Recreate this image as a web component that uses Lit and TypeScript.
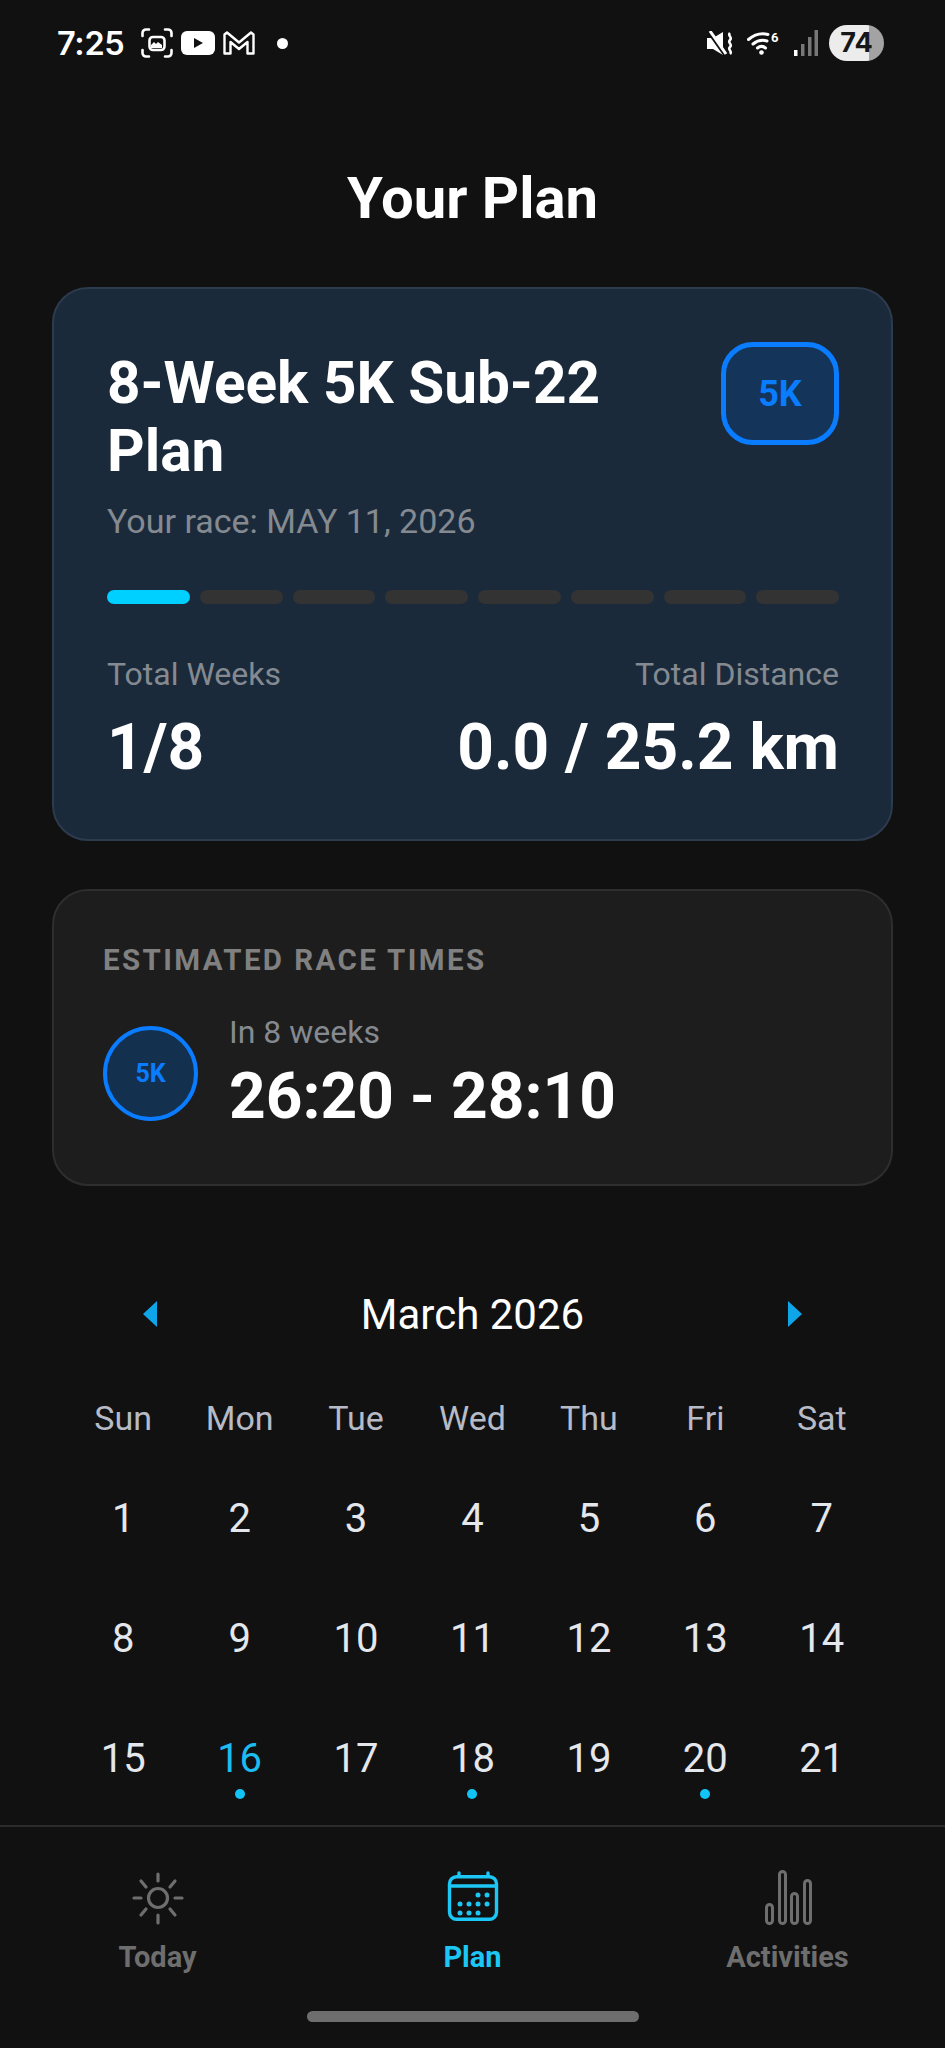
import { LitElement, html, css } from "lit";
import { customElement } from "lit/decorators.js";

const weeks = [[1,2,3,4,5,6,7],[8,9,10,11,12,13,14],[15,16,17,18,19,20,21]];
const dots = new Set([16,18,20]);
const days = ["Sun","Mon","Tue","Wed","Thu","Fri","Sat"];
const calDots = [[40,26],[49,26],[22,35],[31,35],[40,35],[49,35],[22,44],[31,44],[40,44]];

@customElement("app-root")
export class AppRoot extends LitElement {
  static styles = css`
    :host { display:block; width:945px; height:2048px; background:#111112; color:#fff; font-family:Roboto,"Noto Sans",sans-serif; overflow:hidden; }
    .page { height:2048px; display:flex; flex-direction:column; }
    .status { height:86px; flex:none; display:flex; align-items:center; padding:0 61px 0 57px; box-sizing:border-box; }
    .time { font-family:Inter,Roboto,sans-serif; font-weight:600; font-size:32.500px; margin-right:9px; letter-spacing:-.3px; }
    .left { display:flex; align-items:center; gap:8px; }
    .spacer { flex:1; }
    .right { display:flex; align-items:center; }
    .sdot { width:11px; height:11px; border-radius:50%; background:#fff; margin-left:14px; }
    .batt { width:55px; height:36px; border-radius:18px; overflow:hidden; background:linear-gradient(90deg,#ececec 0 40px,#a3a3a3 40px); color:#161616; font-family:Inter,Roboto,sans-serif; font-weight:700; font-size:27px; line-height:36px; text-align:center; margin-left:11px; }
    .main { flex:1; min-height:0; }
    h1 { margin:82px 0 59px; font-size:58px; line-height:60px; font-weight:700; text-align:center; }
    .card { margin:0 52px; box-sizing:border-box; border:2px solid #2c3b4d; border-radius:36px; }
    .plan { height:554px; background:#1b2a3b; padding:53px 52px 0 53px; }
    .phead { display:flex; justify-content:space-between; align-items:flex-start; }
    .ptitle { margin:7px 0 -2px; font-size:58.500px; line-height:68px; font-weight:700; width:560px; }
    .badge { width:118px; height:103px; box-sizing:border-box; border:5px solid #0a7cff; border-radius:32px; background:#143559; color:#0a7cff; display:flex; align-items:center; justify-content:center; font-weight:700; font-size:36px; }
    .race { margin-top:18px; font-size:34px; line-height:40px; color:#858a91; }
    .bars { display:flex; gap:10px; margin-top:49px; }
    .bars i { flex:1; height:14px; border-radius:7px; background:#333; }
    .bars i.on { background:#00d0ff; }
    .stats { display:flex; justify-content:space-between; margin-top:51px; }
    .stat.r { text-align:right; }
    .lbl { font-size:32px; line-height:38px; color:#858a91; }
    .val { font-size:64px; line-height:68px; font-weight:700; margin-top:21px; }
    .est { height:297px; margin-top:48px; background:#1d1d1d; border-color:#2e2e2e; padding:53px 48px 0 49px; }
    .est h2 { margin:0; font-size:29.500px; line-height:32px; letter-spacing:2.400px; font-weight:700; color:#808080; }
    .erow { display:flex; align-items:center; gap:31px; margin-top:37px; }
    .circle { width:95px; height:95px; box-sizing:border-box; border:4px solid #0a7cff; border-radius:50%; background:#14304f; color:#0a7cff; display:flex; align-items:center; justify-content:center; font-weight:700; font-size:25px; }
    .esub { font-size:32px; line-height:38px; color:#858a91; }
    .etime { font-size:64px; line-height:72px; font-weight:700; margin-top:10px; }
    .chead { display:flex; align-items:center; justify-content:space-between; padding:0 143px; margin-top:101px; height:54px; }
    .chead span { font-size:42px; }
    .tri { width:14px; height:26px; display:block; }
    .grid { display:grid; grid-template-columns:repeat(7,1fr); padding:0 65px; }
    .dow { margin-top:52px; }
    .dow div { text-align:center; font-size:34px; line-height:50px; color:#b6bbc6; }
    .rows { margin-top:25px; }
    .cell { height:120px; position:relative; display:flex; justify-content:center; padding-top:16px; box-sizing:border-box; font-size:40px; line-height:70px; color:#e4e7ec; }
    .cell.today { color:#1cbcf0; }
    .cell b { position:absolute; left:50%; top:81px; width:10px; height:10px; margin-left:-5px; border-radius:50%; background:#12c4f5; }
    .nav { flex:none; height:223px; box-sizing:border-box; border-top:2px solid #2b2b2b; display:flex; flex-direction:column; }
    .tabs { display:grid; grid-template-columns:repeat(3,315px); padding-top:42px; }
    .tab { display:flex; flex-direction:column; align-items:center; color:#6e6e6e; font-weight:700; font-size:29px; }
    .tab.on { color:#1cc6f5; }
    .tab svg { height:60px; width:70px; display:block; }
    .tab span { line-height:36px; margin-top:10px; }
    .homewrap { display:flex; justify-content:center; margin-top:36px; }
    .home { width:332px; height:11px; border-radius:6px; background:#6e6e6e; }
    .gap13 { margin-left:13px; }
    .gap14 { margin-left:14px; }
  `;

  render() {
    return html`<div class="page">
      <div class="status">
        <div class="left">
          <span class="time">7:25</span>
          <svg width="32" height="30" viewBox="0 0 32 30" fill="none" stroke="#fff" stroke-width="2.600" stroke-linecap="round"><path d="M1.500 8V5a3.500 3.500 0 0 1 3.500-3.500h3M24 1.500h3A3.500 3.500 0 0 1 30.500 5v3M30.500 22v3a3.500 3.500 0 0 1-3.500 3.500h-3M8 28.500H5A3.500 3.500 0 0 1 1.500 25v-3"/><rect x="8.500" y="9" width="15" height="13" rx="3.500"/><path d="M10 17l3-3 2 2 2-2 4 3v3H10z" fill="#fff" stroke="none"/></svg>
          <svg width="34" height="24" viewBox="0 0 34 24"><rect width="34" height="24" rx="6" fill="#fff"/><path d="M13 7l9 5-9 5z" fill="#111"/></svg>
          <svg width="32" height="24" viewBox="0 0 32 24" fill="none" stroke="#fff" stroke-width="2.400" stroke-linejoin="round"><path d="M1.500 22.500V3.500L4 1.500l12 10 12-10 2.500 2V22.500h-6V11L16 18 7.500 11v11.500z"/></svg>
          <span class="sdot"></span>
        </div>
        <div class="spacer"></div>
        <div class="right">
          <svg width="26" height="25" viewBox="0 0 26 25"><path d="M0 7h6l10-6v23L6 18H0z" fill="#fff"/><path d="M1 0l17 24" stroke="#111" stroke-width="3.500"/><path d="M3 0l16 23" stroke="#fff" stroke-width="3"/><path d="M23 2c-3 3 3 4 0 7s3 4 0 7 3 4 0 7" fill="none" stroke="#fff" stroke-width="2.600"/></svg>
          <svg class="gap14" width="33" height="24" viewBox="0 0 33 24" fill="none" stroke="#fff" stroke-width="3" stroke-linecap="round"><path d="M1.500 8.500C8 3 15 2 21 3.500M6 13c5-4 9-4.500 14-3M10.500 17c2.500-2 5.500-2 8 0"/><circle cx="14.500" cy="21.500" r="2.300" fill="#fff" stroke="none"/><text x="24" y="11" font-size="13" font-weight="700" font-family="Roboto" fill="#fff" stroke="none">6</text></svg>
          <svg class="gap14" width="24" height="26" viewBox="0 0 24 26"><rect x="0" y="20" width="3.500" height="6" fill="#fff"/><rect x="7" y="14" width="3.500" height="12" fill="#777"/><rect x="14" y="7" width="3.500" height="19" fill="#777"/><rect x="20.500" y="0" width="3.500" height="26" fill="#777"/></svg>
          <div class="batt">74</div>
        </div>
      </div>
      <div class="main">
        <h1>Your Plan</h1>
        <div class="card plan">
          <div class="phead">
            <p class="ptitle">8-Week 5K Sub-22 Plan</p>
            <div class="badge">5K</div>
          </div>
          <div class="race">Your race: MAY 11, 2026</div>
          <div class="bars">${[0,1,2,3,4,5,6,7].map(i => html`<i class=${i===0?"on":""}></i>`)}</div>
          <div class="stats">
            <div class="stat"><div class="lbl">Total Weeks</div><div class="val">1/8</div></div>
            <div class="stat r"><div class="lbl">Total Distance</div><div class="val">0.0 / 25.2 km</div></div>
          </div>
        </div>
        <div class="card est">
          <h2>ESTIMATED RACE TIMES</h2>
          <div class="erow">
            <div class="circle">5K</div>
            <div><div class="esub">In 8 weeks</div><div class="etime">26:20 - 28:10</div></div>
          </div>
        </div>
        <div class="chead">
          <svg class="tri" viewBox="0 0 14 26"><path d="M14 0v26L0 13z" fill="#0ea5e9"/></svg>
          <span>March 2026</span>
          <svg class="tri" viewBox="0 0 14 26"><path d="M0 0v26l14-13z" fill="#0ea5e9"/></svg>
        </div>
        <div class="grid dow">${days.map(d => html`<div>${d}</div>`)}</div>
        <div class="rows">
          ${weeks.map(w => html`<div class="grid">${w.map(d => html`<div class="cell ${d===16?"today":""}">${d}${dots.has(d)?html`<b></b>`:""}</div>`)}</div>`)}
        </div>
      </div>
      <div class="nav">
        <div class="tabs">
          <div class="tab">
            <svg viewBox="0 0 70 60" fill="none" stroke="#6e6e6e" stroke-width="3.200" stroke-linecap="round"><circle cx="35" cy="29" r="9.500"/><path d="M35 5v7M35 46v8M11 29h7M52 29h7M18 12l5 6M52 12l-5 6M18 46l5-6M52 46l-5-6"/></svg>
            <span>Today</span>
          </div>
          <div class="tab on">
            <svg viewBox="0 0 70 60" fill="none" stroke="#1cc6f5" stroke-width="3.400" stroke-linecap="round"><rect x="11.500" y="7.700" width="47" height="42.600" rx="7"/><path d="M11.500 17h47M21 4v3M50 4v3"/><g fill="#1cc6f5" stroke="none">${calDots.map(([x,y]) => svgDot(x,y))}</g></svg>
            <span>Plan</span>
          </div>
          <div class="tab">
            <svg viewBox="0 0 70 60" fill="none" stroke="#6e6e6e" stroke-width="3"><rect x="13.500" y="35.500" width="6" height="19" rx="3"/><rect x="26.500" y="2.500" width="6" height="52" rx="3"/><rect x="38.500" y="24.500" width="6" height="30" rx="3"/><rect x="51.500" y="11.500" width="6" height="43" rx="3"/></svg>
            <span>Activities</span>
          </div>
        </div>
        <div class="homewrap"><div class="home"></div></div>
      </div>
    </div>`;
  }
}

import { svg } from "lit";
function svgDot(x: number, y: number) {
  return svg`<circle cx=${x} cy=${y} r="2.500"></circle>`;
}
